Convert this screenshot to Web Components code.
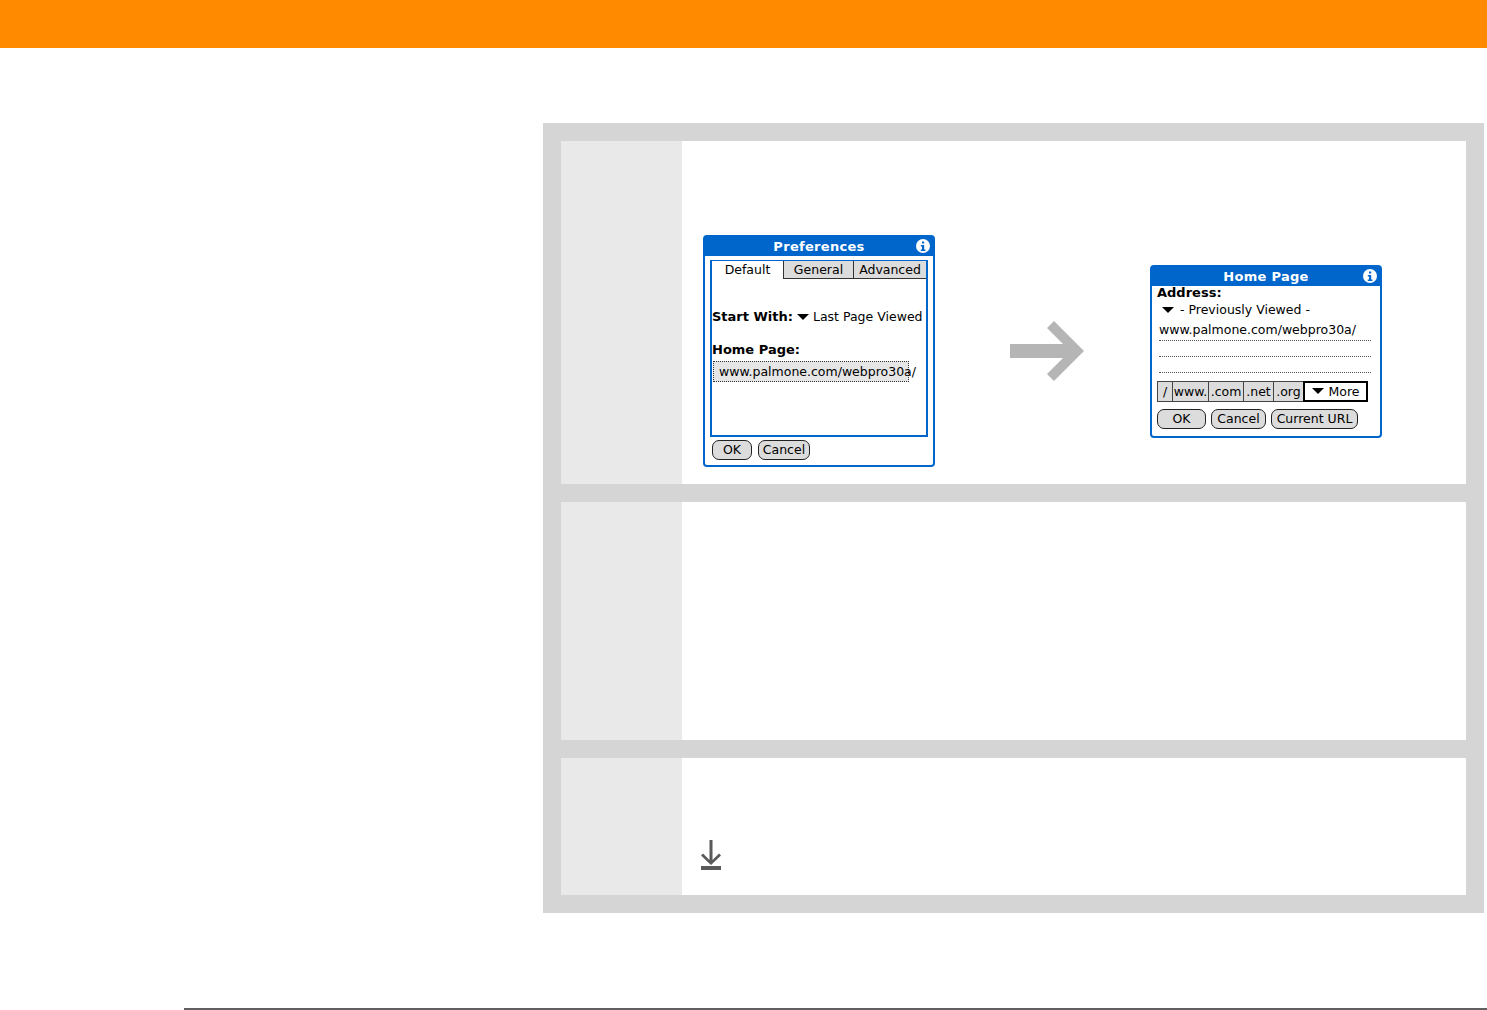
<!DOCTYPE html>
<html>
<head>
<meta charset="utf-8">
<title>Home page preferences</title>
<style>
  html, body { margin: 0; padding: 0; background: #fff; }
  body { width: 1487px; height: 1010px; overflow: hidden; display: flex; flex-direction: column; font-family: "DejaVu Sans", sans-serif; }
</style>
</head>
<body>
<top-bar></top-bar>
<step-panel>
  <step-row style="--h:343px">
    <div style="display:flex;align-items:center;padding:94px 0 17px 21px">
      <palm-dialog heading="Preferences" style="--w:232px;--h:232px">
        <pref-form></pref-form>
      </palm-dialog>
      <big-arrow style="margin:0 66px 0 75px"></big-arrow>
      <palm-dialog heading="Home Page" style="--w:232px;--h:173px">
        <address-form></address-form>
      </palm-dialog>
    </div>
  </step-row>
  <step-row style="--h:238px"></step-row>
  <step-row style="--h:137px">
    <div style="padding:82px 0 0 19px"><down-icon></down-icon></div>
  </step-row>
</step-panel>
<page-rule></page-rule>

<script>
const sheet = `
  .r { font: 400 12.5px/16px "DejaVu Sans", sans-serif; color: #000; white-space: nowrap; }
  .b { font: 700 13px/16px "DejaVu Sans", sans-serif; color: #000; white-space: nowrap; }
  .tri { display: inline-block; width: 0; height: 0; border: 6px solid transparent; border-top: 6px solid #000; border-bottom: 0; }
`;

function define(name, html) {
  customElements.define(name, class extends HTMLElement {
    constructor() {
      super();
      this.attachShadow({mode: 'open'}).innerHTML = `<style>${sheet}</style>` + html;
    }
  });
}

define('top-bar', `<style>:host { display: block; height: 48px; background: #ff8a00; }</style>`);

define('step-panel', `<style>
  :host { display: flex; flex-direction: column; gap: 18px; box-sizing: border-box; width: 941px; margin: 75px 0 0 543px; padding: 18px; background: #d5d5d5; }
</style><slot></slot>`);

define('step-row', `<style>
  :host { display: flex; height: var(--h); background: #fff; }
  .num { width: 121px; flex: none; background: #e9e9e9; }
  .body { flex: 1; min-width: 0; }
</style><div class="num"></div><div class="body"><slot></slot></div>`);

define('big-arrow', `<style>:host { display: block; width: 74px; height: 60px; }</style>
  <svg width="74" height="60" viewBox="0 0 74 60" style="display:block">
    <path fill="#b5b5b5" d="M0 23H53L37 7L44 0L74 30L44 60L37 53L53 37H0Z"/>
  </svg>`);

define('down-icon', `<style>:host { display: block; width: 20px; height: 30px; }</style>
  <svg width="20" height="30" viewBox="0 0 20 30" style="display:block">
    <path fill="#5a5a5a" d="M8.5 0H11.5V20L18 13.5L20 15.5L10 25L0 15.5L2 13.5L8.5 20ZM0 26H20V30H0Z"/>
  </svg>`);

define('page-rule', `<style>:host { display: block; height: 2px; margin: 95px 0 0 184px; background: #5f5f5f; }</style>`);

customElements.define('palm-dialog', class extends HTMLElement {
  constructor() {
    super();
    let root = this.attachShadow({mode: 'open'});
    root.innerHTML = `<style>${sheet}
      :host { display: flex; flex-direction: column; flex: none; box-sizing: border-box; width: var(--w); height: var(--h); border: 2px solid #0066cc; border-radius: 4px; background: #fff; }
      header { position: relative; flex: none; height: 20px; margin-top: -1px; background: #0066cc; color: #fff; text-align: center; font: 700 13px/21px "DejaVu Sans", sans-serif; letter-spacing: .3px; }
      svg { position: absolute; right: 3px; top: 3px; }
      main { flex: 1; min-height: 0; }
    </style>
    <header><span id="t"></span>
      <svg width="14" height="14" viewBox="0 0 14 14">
        <circle cx="7" cy="7" r="7" fill="#fff"/>
        <path fill="#0066cc" d="M6 2.5H8.2V4.5H6ZM4.8 6H8.2V10.5H9.4V12H4.8V10.5H6V7.5H4.8Z"/>
      </svg>
    </header>
    <main><slot></slot></main>`;
    root.querySelector('#t').textContent = this.getAttribute('heading');
  }
});

customElements.define('palm-button', class extends HTMLElement {
  constructor() {
    super();
    this.attachShadow({mode: 'open'}).innerHTML = `<style>${sheet}
      :host { display: block; box-sizing: border-box; height: 20px; border: 1.5px solid #222; border-radius: 7px; background: #dcdcdc; text-align: center; font: 400 12.5px/17px "DejaVu Sans", sans-serif; color: #000; }
    </style><slot></slot>`;
  }
});

define('pref-form', `<style>
  :host { display: flex; flex-direction: column; height: 100%; padding: 0 5px; box-sizing: border-box; }
  .frame { height: 177px; margin-top: 4px; box-sizing: border-box; border: 2px solid #0066cc; border-top-width: 1px; }
  .tabs { display: flex; height: 18px; }
  .tabs div { box-sizing: border-box; text-align: center; line-height: 17px; }
  .tab2 { background: #dcdcdc; border-left: 1px solid #333; border-bottom: 1px solid #333; }
  .start { display: flex; align-items: center; margin: 30px 0 0 0; }
  .home { margin-top: 17px; }
  .field { box-sizing: border-box; width: 196px; height: 21px; margin: 3px 0 0 1px; border: 1px dotted #333; background: #e6e6e6; padding-left: 5px; line-height: 19px; }
  .btns { display: flex; gap: 6px; margin: 3px 0 0 2px; }
</style>
<div class="frame">
  <div class="tabs">
    <div class="r" style="width:71px">Default</div>
    <div class="r tab2" style="width:70px">General</div>
    <div class="r tab2" style="flex:1">Advanced</div>
  </div>
  <div class="start"><span class="b">Start With:</span><span class="tri" style="margin:0 4px"></span><span class="r">Last Page Viewed</span></div>
  <div class="b home">Home Page:</div>
  <div class="r field">www.palmone.com/webpro30a/</div>
</div>
<div class="btns">
  <palm-button style="width:40px">OK</palm-button>
  <palm-button style="width:52px">Cancel</palm-button>
</div>`);

define('address-form', `<style>
  :host { display: block; padding: 0 0 0 5px; }
  .prev { display: flex; align-items: center; margin: 1px 0 0 5px; }
  .line { width: 212px; height: 16px; margin-left: 2px; box-sizing: border-box; border-bottom: 1px dotted #555; }
  .url { height: 20px; margin-top: 3px; padding-left: 0; line-height: 18px; }
  .keys { display: flex; width: 211px; height: 21px; margin-top: 8px; box-sizing: border-box; border: 1px solid #444; background: #dcdcdc; }
  .keys div { box-sizing: border-box; text-align: center; line-height: 19px; border-left: 1px solid #444; }
  .keys div:first-child { border-left: 0; }
  .keys .more { flex: 1; background: #fff; border: 2px solid #000; margin: -1px -1px -1px 0; line-height: 17px; display: flex; align-items: center; justify-content: center; gap: 5px; }
  .btns { display: flex; gap: 5px; margin-top: 7px; }
</style>
<div class="b" style="margin-top:-1px">Address:</div>
<div class="prev"><span class="tri" style="margin-right:6px"></span><span class="r">- Previously Viewed -</span></div>
<div class="r line url">www.palmone.com/webpro30a/</div>
<div class="line"></div>
<div class="line"></div>
<div class="keys">
  <div class="r" style="width:14px">/</div>
  <div class="r" style="width:36px">www.</div>
  <div class="r" style="width:35px">.com</div>
  <div class="r" style="width:30px">.net</div>
  <div class="r" style="width:30px">.org</div>
  <div class="r more"><span class="tri"></span><span>More</span></div>
</div>
<div class="btns">
  <palm-button style="width:49px">OK</palm-button>
  <palm-button style="width:55px">Cancel</palm-button>
  <palm-button style="width:87px">Current URL</palm-button>
</div>`);
</script>
</body>
</html>
